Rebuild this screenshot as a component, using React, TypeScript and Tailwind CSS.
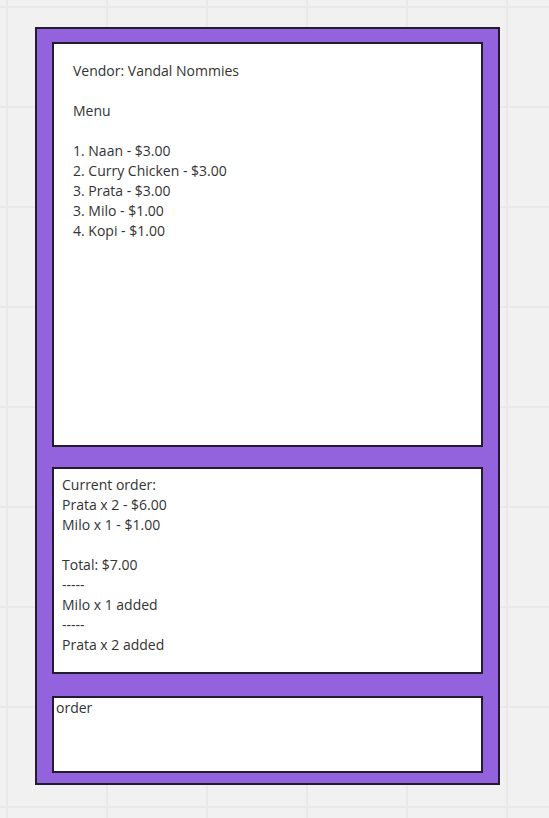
import React from "react";

export default function App() {
  const font = { fontFamily: '"Open Sans", "Noto Sans", sans-serif' };
  return (
    <div
      className="w-[549px] h-[818px] overflow-hidden bg-[#f1f1f1] bg-[linear-gradient(to_right,#e9e9e9_2px,transparent_2px),linear-gradient(to_bottom,#e9e9e9_2px,transparent_2px)] bg-[size:100px_100px] bg-[position:6px_6px] pt-[27px] pl-[35px]"
      style={font}
    >
      <div className="w-[465px] h-[758px] border-2 border-[#231c2c] bg-[#9363dd] px-[15px] pt-[13px] flex flex-col">
        <div className="h-[405px] border-2 border-[#231c2c] bg-white pt-[17px] pl-[19px] text-[14px] leading-[20px] text-[#333333]">
          <div>Vendor: Vandal Nommies</div>
          <div>&nbsp;</div>
          <div>Menu</div>
          <div>&nbsp;</div>
          <div>1. Naan - $3.00</div>
          <div>2. Curry Chicken - $3.00</div>
          <div>3. Prata - $3.00</div>
          <div>3. Milo - $1.00</div>
          <div>4. Kopi - $1.00</div>
        </div>
        <div className="mt-[20px] h-[207px] border-2 border-[#231c2c] bg-white pt-[6px] pl-[8px] text-[14px] leading-[20px] text-[#333333]">
          <div>Current order:</div>
          <div>Prata x 2 - $6.00</div>
          <div>Milo x 1 - $1.00</div>
          <div>&nbsp;</div>
          <div>Total: $7.00</div>
          <div>-----</div>
          <div>Milo x 1 added</div>
          <div>-----</div>
          <div>Prata x 2 added</div>
        </div>
        <div className="mt-[22px] h-[77px] border-2 border-[#231c2c] bg-white pt-0 pl-[2px] text-[14px] leading-[20px] text-[#333333]">
          order
        </div>
      </div>
    </div>
  );
}
